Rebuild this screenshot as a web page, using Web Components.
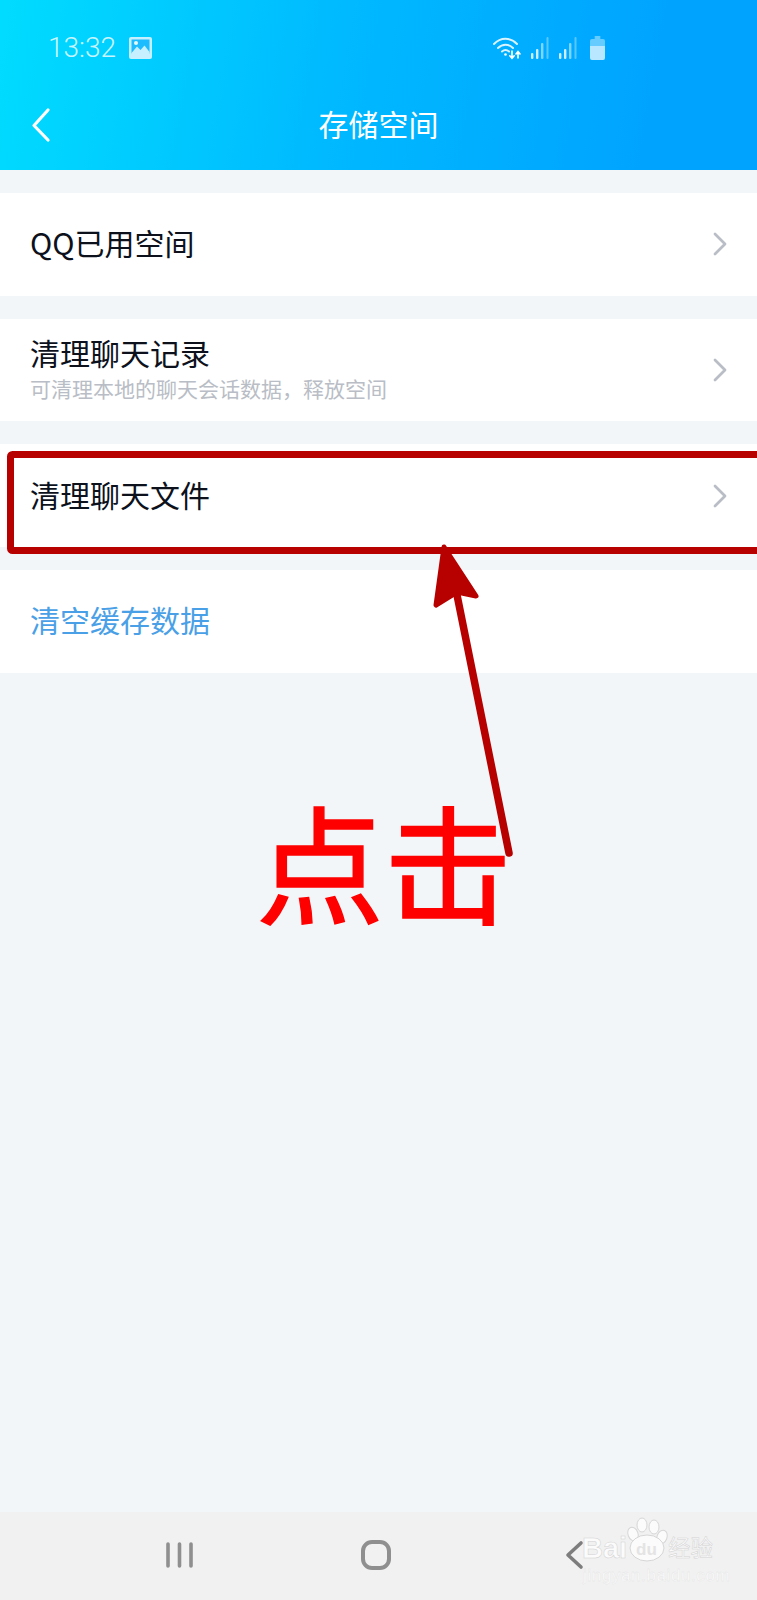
<!DOCTYPE html>
<html lang="zh-CN">
<head>
<meta charset="utf-8">
<title>存储空间</title>
<style>
    html, body {
        margin: 0;
        padding: 0;
    }
    body {
        width: 757px;
        height: 1600px;
        position: relative;
        overflow: hidden;
        display: flex;
        flex-direction: column;
        background: #f3f6f9;
        font-family: "Noto Sans CJK SC", sans-serif;
    }
    .rows {
        flex: 1;
        display: flex;
        flex-direction: column;
        gap: 23px;
        padding-top: 23px;
    }
</style>
</head>
<body>
<qq-header title="存储空间"></qq-header>
<div class="rows">
    <settings-row>QQ已用空间</settings-row>
    <settings-row>清理聊天记录<span slot="sub">可清理本地的聊天会话数据，释放空间</span></settings-row>
    <settings-row>清理聊天文件</settings-row>
    <settings-row link>清空缓存数据</settings-row>
</div>
<nav-bar></nav-bar>
<click-note>点击</click-note>
<baidu-mark></baidu-mark>

<script>
class QqHeader extends HTMLElement {
    constructor() {
        super();
        this.attachShadow({ mode: 'open' });
    }

    connectedCallback() {
        this.shadowRoot.innerHTML = `
            <style>
                :host {
                    display: block;
                    height: 170px;
                    background: linear-gradient(100deg, #00dcff 0%, #00b9ff 45%, #00a4ff 85%);
                    color: #fff;
                }
                .status {
                    display: flex;
                    align-items: center;
                    height: 96px;
                    padding-left: 48px;
                    box-sizing: border-box;
                }
                .time {
                    font: 300 28px/1 Roboto, sans-serif;
                    color: rgba(255,255,255,.8);
                    width: 81px;
                }
                .right {
                    display: flex;
                    align-items: center;
                    margin-left: 341px;
                }
                .bar {
                    position: relative;
                    height: 74px;
                    display: flex;
                    align-items: center;
                    justify-content: center;
                }
                .back {
                    position: absolute;
                    left: 30px;
                    top: 11px;
                }
                h1 {
                    margin: 0;
                    font: 400 30px/1 "Noto Sans CJK SC", sans-serif;
                    color: #fff;
                    transform: translateY(-10px);
                }
            </style>
            <div class="status">
                <span class="time">13:32</span>
                <svg width="23" height="22" viewBox="0 0 23 22">
                    <rect x="0" y="0" width="23" height="22" rx="2" fill="#c6f0ff"/>
                    <rect x="2.5" y="2.5" width="18" height="14" fill="#1cbcff"/>
                    <path d="M2.5 19.5 V16 L8 9.5 L11.5 13 L15.5 8.5 L20.5 15 V19.5 Z" fill="#c6f0ff"/>
                    <circle cx="7" cy="6" r="2" fill="#e6f8ff"/>
                </svg>
                <div class="right">
                    <svg width="28" height="24" viewBox="0 0 28 24" fill="none" stroke="#fff" stroke-linecap="round">
                        <path d="M1 8 C7.5 1 17.5 1 24 8" stroke-width="2" opacity=".85"/>
                        <path d="M5 12 C9.5 7.5 15.5 7.5 20 12" stroke-width="2" opacity=".85"/>
                        <path d="M9 15.5 C11 13.8 14 13.8 16 15.5" stroke-width="2" opacity=".85"/>
                        <circle cx="12.5" cy="18.5" r="1.3" fill="#fff" stroke="none"/>
                        <path d="M19 15 V22 M16.8 19.8 L19 22.3 L21.2 19.8" stroke-width="1.6"/>
                        <path d="M25 22 V16 M23 18 L25 15.6 L27 18" stroke-width="1.6"/>
                    </svg>
                    <svg width="20" height="22" viewBox="0 0 20 22" style="margin-left:10px" fill="#fff">
                        <rect x="0" y="16" width="2.4" height="6" rx="1" opacity=".8"/>
                        <rect x="5" y="12" width="2.4" height="10" rx="1" opacity=".8"/>
                        <rect x="10" y="6" width="2.4" height="16" rx="1" opacity=".5"/>
                        <rect x="15.5" y="0" width="2" height="22" rx="1" opacity=".35"/>
                    </svg>
                    <svg width="20" height="22" viewBox="0 0 20 22" style="margin-left:8px" fill="#fff">
                        <rect x="0" y="16" width="2.4" height="6" rx="1" opacity=".8"/>
                        <rect x="5" y="12" width="2.4" height="10" rx="1" opacity=".8"/>
                        <rect x="10" y="6" width="2.4" height="16" rx="1" opacity=".5"/>
                        <rect x="15.5" y="0" width="2" height="22" rx="1" opacity=".35"/>
                    </svg>
                    <svg width="15" height="24" viewBox="0 0 16 24" style="margin-left:11px" preserveAspectRatio="none">
                        <path d="M5 0 H11 V3 H14 Q16 3 16 5 V10 H0 V5 Q0 3 2 3 H5 Z" fill="rgba(255,255,255,.4)"/>
                        <path d="M0 10 H16 V22 Q16 24 14 24 H2 Q0 24 0 22 Z" fill="rgba(255,255,255,.72)"/>
                    </svg>
                </div>
            </div>
            <div class="bar">
                <svg class="back" width="22" height="36" viewBox="0 0 22 36" fill="none" stroke="#fff" stroke-width="3.2" stroke-linecap="round" stroke-linejoin="round">
                    <path d="M18 3 L4 18.5 L18 33"/>
                </svg>
                <h1>${this.getAttribute('title')}</h1>
            </div>
        `;
    }
}

class SettingsRow extends HTMLElement {
    constructor() {
        super();
        this.attachShadow({ mode: 'open' });
    }

    connectedCallback() {
        this.shadowRoot.innerHTML = `
            <style>
                :host {
                    display: flex;
                    align-items: center;
                    justify-content: space-between;
                    height: 102.7px;
                    background: #fff;
                    padding: 0 30px;
                    color: #0c111c;
                }
                :host([link]) {
                    color: #4aa0e6;
                }
                :host([link]) svg {
                    display: none;
                }
                .text {
                    display: flex;
                    flex-direction: column;
                    padding-bottom: 4px;
                }
                .main {
                    font-size: 30px;
                    line-height: 36px;
                }
                ::slotted([slot=sub]) {
                    font-size: 21px;
                    line-height: 30px;
                    color: #b9bdc5;
                    margin-top: 3px;
                    display: block;
                }
            </style>
            <div class="text">
                <div class="main"><slot></slot></div>
                <slot name="sub"></slot>
            </div>
            <svg width="14" height="24" viewBox="0 0 14 24" fill="none" stroke="#b9bec6" stroke-width="2.8" stroke-linecap="round" stroke-linejoin="round">
                <path d="M2 2 L12 12 L2 22"/>
            </svg>
        `;
    }
}

class NavBar extends HTMLElement {
    constructor() {
        super();
        this.attachShadow({ mode: 'open' });
    }

    connectedCallback() {
        this.shadowRoot.innerHTML = `
            <style>
                :host {
                    display: flex;
                    align-items: center;
                    height: 88px;
                    background: #f1f1f1;
                    padding-left: 166px;
                    box-sizing: border-box;
                }
                svg {
                    display: block;
                    margin-top: -2px;
                }
            </style>
            <svg width="27" height="28" viewBox="0 0 27 28" stroke="#8f8f8f" stroke-width="3.6" stroke-linecap="round">
                <path d="M2 3 V25 M13.5 3 V25 M25 3 V25"/>
            </svg>
            <svg width="32" height="32" viewBox="0 0 32 32" fill="none" stroke="#8f8f8f" stroke-width="4" style="margin-left:167px">
                <rect x="3" y="3" width="26" height="26" rx="9"/>
            </svg>
            <svg width="19" height="30" viewBox="0 0 19 30" fill="none" stroke="#7d7d7d" stroke-width="3.6" stroke-linecap="round" stroke-linejoin="round" style="margin-left:173px">
                <path d="M16 3 L3 15 L16 27"/>
            </svg>
        `;
    }
}

// hand drawn box and arrow plus the big label, sits on top of the page
class ClickNote extends HTMLElement {
    constructor() {
        super();
        this.attachShadow({ mode: 'open' });
    }

    connectedCallback() {
        this.shadowRoot.innerHTML = `
            <style>
                :host {
                    position: absolute;
                    left: 0;
                    top: 0;
                    width: 757px;
                    height: 1600px;
                    pointer-events: none;
                }
                .label {
                    position: absolute;
                    left: 256px;
                    top: 770px;
                    font: 400 128px/1.4 "Noto Sans CJK SC", sans-serif;
                    -webkit-text-stroke: 1.5px #ff0000;
                    color: #ff0000;
                    white-space: nowrap;
                }
                svg {
                    position: absolute;
                    left: 0;
                    top: 0;
                }
            </style>
            <div class="label"><slot></slot></div>
            <svg width="757" height="1600" viewBox="0 0 757 1600" fill="none">
                <rect x="10.5" y="454.5" width="760" height="96" rx="2" stroke="#b70000" stroke-width="7"/>
                <path d="M456 590 L509 853" stroke="#b70000" stroke-width="7.5" stroke-linecap="round"/>
                <path d="M444 547 L476 596 L457 592 L436 605 Z" fill="#b70000" stroke="#b70000" stroke-width="5" stroke-linejoin="round"/>
            </svg>
        `;
    }
}

class BaiduMark extends HTMLElement {
    constructor() {
        super();
        this.attachShadow({ mode: 'open' });
    }

    connectedCallback() {
        this.shadowRoot.innerHTML = `
            <style>
                :host {
                    position: absolute;
                    left: 580px;
                    top: 1515px;
                    width: 150px;
                    height: 72px;
                    color: #fbfbfb;
                    pointer-events: none;
                }
                span, svg {
                    position: absolute;
                    white-space: nowrap;
                }
                span {
                    -webkit-text-stroke: .5px #d2d2d2;
                }
                .bai {
                    left: 2px;
                    top: 19px;
                    font: 700 29px/1 "Liberation Sans", sans-serif;
                }
                .du {
                    left: 56px;
                    top: 26px;
                    font: 700 17px/1 "Liberation Sans", sans-serif;
                    color: #e4e4e4;
                    -webkit-text-stroke: 0;
                }
                .cn {
                    left: 88px;
                    top: 20px;
                    font: 400 22.5px/1 "Noto Sans CJK SC", sans-serif;
                }
                .url {
                    left: 3px;
                    top: 52px;
                    font: 400 17px/1 "Liberation Sans", sans-serif;
                    letter-spacing: .6px;
                    -webkit-text-stroke: .3px #e2e2e2;
                }
                svg {
                    left: 46px;
                    top: 2px;
                }
            </style>
            <svg width="44" height="48" viewBox="0 0 44 48" fill="#fbfbfb" stroke="#d6d6d6" stroke-width="1">
                <ellipse cx="7" cy="17" rx="5" ry="7" transform="rotate(-20 7 17)"/>
                <ellipse cx="16" cy="8" rx="5" ry="7"/>
                <ellipse cx="28" cy="10" rx="5" ry="7"/>
                <ellipse cx="36" cy="20" rx="5" ry="7" transform="rotate(20 36 20)"/>
                <ellipse cx="21" cy="31" rx="17" ry="13"/>
            </svg>
            <span class="bai">Bai</span>
            <span class="du">du</span>
            <span class="cn">经验</span>
            <span class="url">jingyan.baidu.com</span>
        `;
    }
}

customElements.define('qq-header', QqHeader);
customElements.define('settings-row', SettingsRow);
customElements.define('nav-bar', NavBar);
customElements.define('click-note', ClickNote);
customElements.define('baidu-mark', BaiduMark);
</script>
</body>
</html>
